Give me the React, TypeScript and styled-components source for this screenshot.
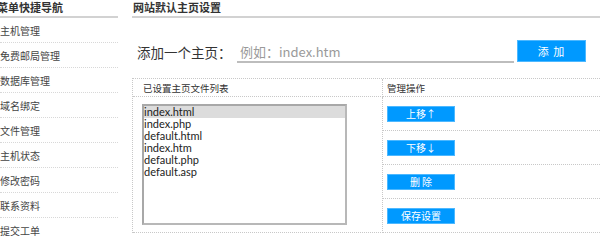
import React from "react";
import styled, { createGlobalStyle } from "styled-components";

const GlobalStyle = createGlobalStyle`
  html, body {
    margin: 0;
    padding: 0;
    background: #ffffff;
  }
  body {
    font-family: "Noto Sans CJK SC", "Noto Sans", sans-serif;
    color: #333;
  }
`;

const menuItems = [
  "主机管理",
  "免费邮局管理",
  "数据库管理",
  "域名绑定",
  "文件管理",
  "主机状态",
  "修改密码",
  "联系资料",
  "提交工单",
];

const homeFiles = [
  "index.html",
  "index.php",
  "default.html",
  "index.htm",
  "default.php",
  "default.asp",
];

const actions = ["上移↑", "下移↓", "删 除", "保存设置"];

const App: React.FC = () => {
  return (
    <>
      <GlobalStyle />
      <Page>
        <Sidebar>
          <SideTitle>菜单快捷导航</SideTitle>
          {menuItems.map((item) => (
            <MenuItem key={item}>{item}</MenuItem>
          ))}
        </Sidebar>
        <Main>
          <MainTitle>网站默认主页设置</MainTitle>
          <AddRow>
            <AddLabel>添加一个主页：</AddLabel>
            <AddInput placeholder="例如：index.htm" />
            <BlueButton $wide>添 加</BlueButton>
          </AddRow>
          <Table>
            <HeadCell $left>已设置主页文件列表</HeadCell>
            <HeadCell>管理操作</HeadCell>
            <ListCell>
              <ListBox>
                {homeFiles.map((file, i) => (
                  <ListItem key={file} $selected={i === 0}>
                    {file}
                  </ListItem>
                ))}
              </ListBox>
            </ListCell>
            {actions.map((label) => (
              <ActionCell key={label}>
                <BlueButton>{label}</BlueButton>
              </ActionCell>
            ))}
          </Table>
        </Main>
      </Page>
    </>
  );
};

const Page = styled.div`
  display: flex;
  width: 600px;
  height: 240px;
  overflow: hidden;
`;

const Sidebar = styled.div`
  width: 118px;
  flex-shrink: 0;
`;

const SideTitle = styled.div`
  height: 16px;
  line-height: 15px;
  font-size: 11px;
  font-weight: bold;
  color: #333;
  text-indent: -3px;
  border-bottom: 2px solid #d2d2d2;
  white-space: nowrap;
`;

const MenuItem = styled.div`
  height: 24px;
  line-height: 25px;
  font-size: 10px;
  color: #444;
  border-bottom: 1px dotted #d8d8d8;
  white-space: nowrap;
`;

const Main = styled.div`
  flex: 1;
  margin-left: 14px;
  min-width: 0;
`;

const MainTitle = styled.div`
  height: 16px;
  line-height: 15px;
  font-size: 11px;
  font-weight: bold;
  color: #333;
  padding-left: 1px;
  border-bottom: 2px solid #d2d2d2;
  white-space: nowrap;
`;

const AddRow = styled.div`
  height: 60px;
  display: flex;
  align-items: center;
  padding-left: 5px;
  padding-top: 8px;
  box-sizing: border-box;
`;

const AddLabel = styled.span`
  font-size: 13.5px;
  color: #333;
  width: 100px;
  white-space: nowrap;
`;

const AddInput = styled.input`
  width: 277px;
  height: 22px;
  box-sizing: border-box;
  border: none;
  border-bottom: 2px solid #bdbdbd;
  outline: none;
  padding: 0 0 0 3px;
  font-family: "Noto Sans CJK SC", "Open Sans", sans-serif;
  font-size: 13px;
  color: #333;
  background: transparent;
  &::placeholder {
    color: #9a9a9a;
  }
`;

const BlueButton = styled.button<{ $wide?: boolean }>`
  display: block;
  width: ${(p) => (p.$wide ? "69px" : "68px")};
  height: ${(p) => (p.$wide ? "22px" : "16px")};
  margin-left: ${(p) => (p.$wide ? "3px" : "0")};
  margin-top: ${(p) => (p.$wide ? "-2px" : "0")};
  padding: 0;
  background: #0099ff;
  border: 1px solid #4db8ff;
  color: #ffffff;
  font-family: "Noto Sans CJK SC", sans-serif;
  font-size: ${(p) => (p.$wide ? "11px" : "10px")};
  line-height: 1;
  letter-spacing: ${(p) => (p.$wide ? "1px" : "0")};
  cursor: pointer;
  box-sizing: border-box;
`;

const Table = styled.div`
  display: grid;
  grid-template-columns: 250px 1fr;
  grid-template-rows: 18px repeat(4, 34px);
  border-top: 1px dotted #c8c8c8;
  border-left: 1px dotted #c8c8c8;
`;

const HeadCell = styled.div<{ $left?: boolean }>`
  box-sizing: border-box;
  padding-left: ${(p) => (p.$left ? "10px" : "4px")};
  line-height: 19px;
  font-size: 9.5px;
  color: #333;
  border-bottom: 1px dotted #c8c8c8;
  border-right: ${(p) => (p.$left ? "1px dotted #c8c8c8" : "none")};
  white-space: nowrap;
`;

const ListCell = styled.div`
  grid-column: 1;
  grid-row: 2 / span 4;
  box-sizing: border-box;
  padding: 7px 0 0 9px;
  border-right: 1px dotted #c8c8c8;
  border-bottom: 1px dotted #c8c8c8;
`;

const ListBox = styled.div`
  width: 205px;
  height: 121px;
  box-sizing: border-box;
  border: 2px solid #b8b8b8;
  border-top-color: #a8a8a8;
  border-left-color: #a8a8a8;
  background: #fff;
`;

const ListItem = styled.div<{ $selected?: boolean }>`
  height: 12px;
  line-height: 12px;
  font-family: "Lato", "Open Sans", sans-serif;
  font-size: 11px;
  color: #222;
  background: ${(p) => (p.$selected ? "#dcdcdc" : "transparent")};
`;

const ActionCell = styled.div`
  grid-column: 2;
  box-sizing: border-box;
  padding: 9px 0 0 4px;
  border-bottom: 1px dotted #c8c8c8;
`;

export default App;
